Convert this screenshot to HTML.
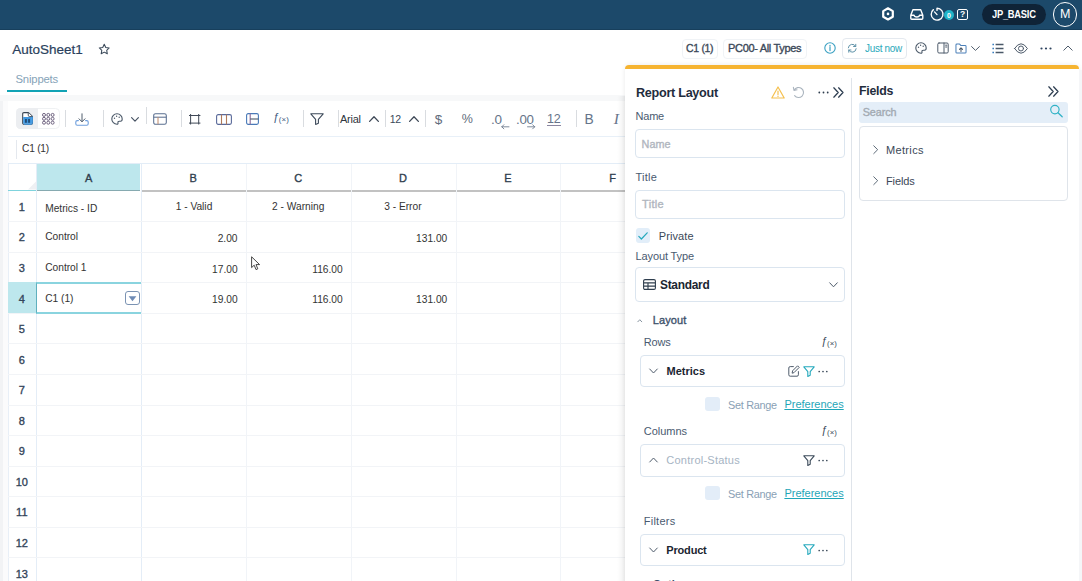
<!DOCTYPE html>
<html>
<head>
<meta charset="utf-8">
<title>AutoSheet1</title>
<style>
*{box-sizing:border-box;margin:0;padding:0}
html,body{width:1082px;height:581px;overflow:hidden;background:#fff;font-family:"Liberation Sans",sans-serif;color:#2b3a4a}
.abs{position:absolute}
#app{position:absolute;left:0;top:0;width:1082px;height:581px;overflow:hidden}
.t{position:absolute;white-space:nowrap;line-height:1;display:block}
svg{position:absolute;overflow:visible}
.ic{fill:none;stroke:#4f5c6c;stroke-width:1;stroke-linecap:round;stroke-linejoin:round}
.vl{position:absolute;width:1px;background:#f1f4f8}
.hl{position:absolute;height:1px;background:#f2f4f7}
.inp{position:absolute;border:1px solid #dbe5ef;border-radius:4px;background:#fff}
.sep{position:absolute;width:1px;background:#d9dce0;top:110px;height:17px}
</style>
</head>
<body>
<div id="app">

<div class="abs" style="left:0;top:0;width:1082px;height:30px;background:#1c496a"></div>
<div class="abs" style="left:0;top:29px;width:1082px;height:1.2px;background:#173f5c"></div>
<svg style="left:882.4px;top:7.4px" width="12" height="13.8" viewBox="0 0 12 13.8"><path d="M6 1.3 L10.8 4.1 V9.7 L6 12.5 L1.2 9.7 V4.1 Z" fill="none" stroke="#fff" stroke-width="2.2" stroke-linejoin="round"/><circle cx="6" cy="6.9" r="1.3" fill="#fff"/></svg>
<svg style="left:909.8px;top:8.8px" width="13.6" height="11" viewBox="0 0 13.6 11"><path d="M0.8 6.2 L2.9 0.8 H10.7 L12.8 6.2 V9.2 Q12.8 10.2 11.8 10.2 H1.8 Q0.8 10.2 0.8 9.2 Z M0.8 6.2 H4 Q4.3 8 6.8 8 Q9.3 8 9.6 6.2 H12.8" fill="none" stroke="#fff" stroke-width="1.4" stroke-linejoin="round"/></svg>
<svg style="left:930.2px;top:6.8px" width="14" height="14" viewBox="0 0 14 14"><path d="M3.4 2.6 A5.9 5.9 0 1 0 7 1.3 V3.4 M7 7.6 L4.5 4.9" fill="none" stroke="#fff" stroke-width="1.35" stroke-linecap="round"/></svg>
<div class="abs" style="left:943.7px;top:9.7px;width:10.6px;height:10.6px;border-radius:5.3px;background:#20b4c8"></div>
<div class="t" style="left:947.1px;top:11.6px;font-size:7px;font-weight:bold;color:#fff;">0</div>
<div class="abs" style="left:956.8px;top:8.9px;width:11.2px;height:10.9px;border:1.4px solid #fff;border-radius:2px"></div>
<div class="t" style="left:959.9px;top:10.4px;font-size:8.5px;font-weight:bold;color:#fff;">?</div>
<div class="abs" style="left:981.5px;top:3.8px;width:64.3px;height:21.6px;border-radius:10.8px;background:#0f2337"></div>
<div class="t" style="left:992.3px;top:9.1px;font-size:11px;font-weight:bold;color:#fff;letter-spacing:-0.30px;transform:scaleX(0.850);transform-origin:0 0;">JP_BASIC</div>
<div class="abs" style="left:1052.8px;top:2.4px;width:24.4px;height:24.4px;border-radius:12.2px;border:1.2px solid #fff"></div>
<div class="t" style="left:1060.1px;top:8.4px;font-size:12.5px;color:#fff;">M</div>
<div class="t" style="left:12.2px;top:42.5px;font-size:13.5px;color:#2a3f5c;-webkit-text-stroke:0.2px #2a3f5c;">AutoSheet1</div>
<svg style="left:98px;top:43px" width="12.5" height="12.5" viewBox="0 0 24 24"><path d="M12 2.5 L14.9 8.6 L21.5 9.5 L16.7 14.1 L17.9 20.7 L12 17.5 L6.1 20.7 L7.3 14.1 L2.5 9.5 L9.1 8.6 Z" fill="none" stroke="#3b4a5a" stroke-width="2" stroke-linejoin="round"/></svg>
<div class="t" style="left:15.5px;top:73.6px;font-size:11.3px;color:#86a3b8;letter-spacing:-0.18px;">Snippets</div>
<div class="abs" style="left:6.7px;top:89.9px;width:60.5px;height:2.6px;background:#12a3b5"></div>
<div class="abs" style="left:681.5px;top:38.5px;width:36.5px;height:20px;border:1px solid #f0f3f6;border-radius:4px"></div>
<div class="t" style="left:686.0px;top:43.3px;font-size:11px;color:#3b4858;letter-spacing:-0.30px;transform:scaleX(0.949);transform-origin:0 0;-webkit-text-stroke:0.35px #3b4858;">C1 (1)</div>
<div class="abs" style="left:723px;top:38.5px;width:83.5px;height:20px;border:1px solid #f0f3f6;border-radius:4px"></div>
<div class="t" style="left:728.0px;top:43.3px;font-size:11px;color:#3b4858;letter-spacing:-0.32px;-webkit-text-stroke:0.35px #3b4858;">PC00- All Types</div>
<svg style="left:823.5px;top:42px" width="12" height="12" viewBox="0 0 12 12"><circle cx="6" cy="6" r="5.2" fill="none" stroke="#3aa0c2" stroke-width="1.1"/><path d="M6 5.2 V8.6 M6 3.3 V3.9" stroke="#3aa0c2" stroke-width="1.2" stroke-linecap="round"/></svg>
<div class="abs" style="left:842.4px;top:38px;width:65px;height:21px;border:1px solid #e4e9ef;border-radius:4px"></div>
<svg style="left:846.8px;top:43px" width="10.5" height="10.5" viewBox="0 0 12 12"><path d="M1.5 5.5 A4.5 4.5 0 0 1 10 4 M10 1.5 V4 H7.5 M10.5 6.5 A4.5 4.5 0 0 1 2 8 M2 10.5 V8 H4.5" fill="none" stroke="#5a8fa6" stroke-width="1.1" stroke-linecap="round" stroke-linejoin="round"/></svg>
<div class="t" style="left:864.6px;top:43.3px;font-size:11px;color:#2aa8ba;letter-spacing:-0.30px;transform:scaleX(0.902);transform-origin:0 0;">Just now</div>
<svg style="left:915px;top:42px" width="12" height="12" viewBox="0 0 12 12"><path d="M6 0.8 A5.2 5.2 0 1 0 6 11.2 Q7.2 11.2 7 10 Q6.6 8.2 8.4 8.2 H9.6 Q11.2 8.2 11.2 6 A5.2 5.2 0 0 0 6 0.8 Z" fill="none" stroke="#4a5868" stroke-width="1.1"/><circle cx="3.5" cy="5.2" r="0.7" fill="#4a5868"/><circle cx="5.6" cy="3.3" r="0.7" fill="#4a5868"/><circle cx="8.2" cy="4.2" r="0.7" fill="#4a5868"/></svg>
<svg style="left:937px;top:42px" width="12" height="12" viewBox="0 0 12 12"><rect x="0.8" y="1" width="10.4" height="10" rx="1.2" class="ic"/><path d="M7 1 V11 M8.6 3.2 H9.8 M8.6 5 H9.8" class="ic"/></svg>
<svg style="left:954.6px;top:43.3px" width="12" height="11" viewBox="0 0 13 12"><path d="M1 2.2 Q1 1.2 2 1.2 H5 L6.2 2.6 H11 Q12 2.6 12 3.6 V10 Q12 11 11 11 H2 Q1 11 1 10 Z" fill="none" stroke="#4a7fb8" stroke-width="1.1" stroke-linejoin="round"/><path d="M6.5 9.2 V5.4 M4.8 7 L6.5 5.3 L8.2 7" fill="none" stroke="#4a5868" stroke-width="1.1" stroke-linecap="round" stroke-linejoin="round"/></svg>
<svg style="left:971px;top:46px" width="9" height="5" viewBox="0 0 9 5"><path d="M0.6 0.6 L4.5 4.4 L8.4 0.6" class="ic"/></svg>
<svg style="left:992px;top:43px" width="12" height="11" viewBox="0 0 12 11"><path d="M3.6 1.5 H11.5 M3.6 5.5 H11.5 M3.6 9.5 H11.5" stroke="#4a5868" stroke-width="1.4" fill="none"/><path d="M0.4 1.5 H2 M0.4 5.5 H2 M0.4 9.5 H2" stroke="#3a7fc0" stroke-width="1.6" fill="none"/></svg>
<svg style="left:1014px;top:42.5px" width="14" height="11" viewBox="0 0 14 11"><path d="M0.6 5.5 Q3.6 0.8 7 0.8 Q10.4 0.8 13.4 5.5 Q10.4 10.2 7 10.2 Q3.6 10.2 0.6 5.5 Z" class="ic"/><circle cx="7" cy="5.5" r="2.5" class="ic"/></svg>
<svg style="left:1040px;top:46.5px" width="12" height="3" viewBox="0 0 12 3"><circle cx="1.5" cy="1.5" r="1.1" fill="#2f4560"/><circle cx="6" cy="1.5" r="1.1" fill="#2f4560"/><circle cx="10.5" cy="1.5" r="1.1" fill="#2f4560"/></svg>
<svg style="left:1063px;top:45px" width="10" height="6" viewBox="0 0 10 6"><path d="M0.8 5.2 L5 1 L9.2 5.2" class="ic"/></svg>
<div class="abs" style="left:0;top:95px;width:1082px;height:486px;background:#f7f8f9"></div>
<div class="abs" style="left:8.2px;top:100.6px;width:1075px;height:481px;background:#fff"></div>
<div class="abs" style="left:0;top:101px;width:8.2px;height:480px;background:#fbfbfc"></div>
<div class="abs" style="left:0;top:101px;width:2.5px;height:480px;background:#f2f3f5"></div>
<div class="abs" style="left:8px;top:164px;width:1px;height:417px;background:#e8eff7"></div>
<div class="abs" style="left:16.3px;top:108.2px;width:43.4px;height:21px;border:1px solid #eff1f3;border-radius:4.5px;background:#fff"></div>
<div class="abs" style="left:16.3px;top:108.2px;width:21.7px;height:21px;border-radius:4.5px 0 0 4.5px;background:#eceef1"></div>
<svg style="left:22px;top:112px" width="11.1" height="12.9" viewBox="0 0 11 13"><path d="M1.8 0.6 H6.4 L10.4 4.4 V11 Q10.4 12.4 9 12.4 H2 Q0.6 12.4 0.6 11 V1.8 Q0.6 0.6 1.8 0.6 Z" fill="#fff" stroke="#3a4654" stroke-width="1.1" stroke-linejoin="round"/><path d="M1.1 5 H9.9 V11 Q9.9 11.9 9 11.9 H2 Q1.1 11.9 1.1 11 Z" fill="#3f97e0"/><path d="M6.2 0.8 V3.2 Q6.2 4.6 7.6 4.6 H10.2" fill="#fff" stroke="#3a4654" stroke-width="0.9"/><path d="M3.9 7 V10.8 M7 7 V10.8" stroke="#1c3f63" stroke-width="1.6"/><path d="M10.4 4.6 V11 Q10.4 12.4 9 12.4 H2" fill="none" stroke="#3f97e0" stroke-width="1"/></svg>
<svg style="left:42.2px;top:112.8px" width="12.6" height="11.6" viewBox="0 0 12.6 11.6"><circle cx="2.0" cy="1.9" r="1.5" fill="none" stroke="#6e6280" stroke-width="1"/><circle cx="6.3" cy="1.9" r="1.5" fill="none" stroke="#6e6280" stroke-width="1"/><circle cx="10.6" cy="1.9" r="1.5" fill="none" stroke="#6e6280" stroke-width="1"/><circle cx="2.0" cy="5.8" r="1.5" fill="none" stroke="#6e6280" stroke-width="1"/><circle cx="6.3" cy="5.8" r="1.5" fill="none" stroke="#6e6280" stroke-width="1"/><circle cx="10.6" cy="5.8" r="1.5" fill="none" stroke="#6e6280" stroke-width="1"/><circle cx="2.0" cy="9.7" r="1.5" fill="none" stroke="#6e6280" stroke-width="1"/><circle cx="6.3" cy="9.7" r="1.5" fill="none" stroke="#6e6280" stroke-width="1"/><circle cx="10.6" cy="9.7" r="1.5" fill="none" stroke="#6e6280" stroke-width="1"/></svg>
<div class="sep" style="left:64.5px"></div>
<svg style="left:75px;top:112.5px" width="14" height="13" viewBox="0 0 14 13"><path d="M7 0.8 V8.6 M4 5.8 L7 8.8 L10 5.8" class="ic"/><path d="M3.4 7.6 H2.2 Q0.8 7.6 0.8 9 V10.8 Q0.8 12.2 2.2 12.2 H11.8 Q13.2 12.2 13.2 10.8 V9 Q13.2 7.6 11.8 7.6 H10.6" fill="none" stroke="#6f9fdd" stroke-width="1.1" stroke-linecap="round"/></svg>
<div class="sep" style="left:103px"></div>
<svg style="left:111px;top:113px" width="12" height="12" viewBox="0 0 12 12"><path d="M6 0.8 A5.2 5.2 0 1 0 6 11.2 Q7.2 11.2 7 10 Q6.6 8.2 8.4 8.2 H9.6 Q11.2 8.2 11.2 6 A5.2 5.2 0 0 0 6 0.8 Z" fill="none" stroke="#4a5868" stroke-width="1.1"/><circle cx="3.5" cy="5.2" r="0.7" fill="#4a5868"/><circle cx="5.6" cy="3.3" r="0.7" fill="#4a5868"/><circle cx="8.2" cy="4.2" r="0.7" fill="#4a5868"/></svg>
<svg style="left:131px;top:117px" width="8" height="5" viewBox="0 0 8 5"><path d="M0.6 0.6 L4 4.2 L7.4 0.6" class="ic" style="stroke-width:1.15;stroke:#465262"/></svg>
<div class="sep" style="left:145.5px;top:107px"></div>
<svg style="left:152.5px;top:113px" width="14" height="12" viewBox="0 0 14 12"><rect x="0.7" y="0.7" width="12.6" height="10.6" rx="1.8" fill="none" stroke="#5a6f90" stroke-width="1.05"/><path d="M0.7 4.2 H13.3" stroke="#5a6f90" stroke-width="1.05"/><path d="M5 4.2 V11.3" stroke="#c08a6a" stroke-width="1"/></svg>
<div class="sep" style="left:181px"></div>
<svg style="left:189.1px;top:113.6px" width="11.4" height="10.5" viewBox="0 0 11.4 10.5"><path d="M1.6 0 V10.5 M9.7 0 V10.5 M0 1.5 H11.4 M0 9.1 H11.4" stroke="#3f4856" stroke-width="1" fill="none"/></svg>
<svg style="left:216px;top:114px" width="16" height="11" viewBox="0 0 16 11"><rect x="0.6" y="0.6" width="14.8" height="9.8" rx="1.6" fill="none" stroke="#5a6a9a" stroke-width="1.1"/><path d="M5.5 0.6 V10.4 M10.5 0.6 V10.4" stroke="#b07a5a" stroke-width="1.1"/></svg>
<svg style="left:246px;top:113px" width="13" height="12" viewBox="0 0 13 12"><rect x="0.6" y="0.6" width="11.8" height="10.8" rx="1.6" fill="none" stroke="#4a7ab8" stroke-width="1.1"/><path d="M4.2 0.6 V11.4" stroke="#8a6a9a" stroke-width="1.1"/><path d="M4.2 6 H12.4" stroke="#4a5868" stroke-width="1.1"/></svg>
<div class="t" style="left:272.8px;top:112.1px;font-size:11px;color:#3d5a80;font-style:italic">ƒ</div>
<div class="t" style="left:278.8px;top:116.3px;font-size:7.92px;color:#3d5a80;letter-spacing:0.11px;">(×)</div>
<div class="sep" style="left:303px"></div>
<svg style="left:310px;top:113px" width="14" height="12" viewBox="0 0 14 12"><path d="M0.8 0.8 H13.2 L8.4 6.4 V10.2 L5.6 11.4 V6.4 Z" fill="none" stroke="#3d4a5a" stroke-width="1.1" stroke-linejoin="round"/></svg>
<div class="sep" style="left:338px"></div>
<div class="t" style="left:340.0px;top:113.7px;font-size:11px;color:#2f3640;letter-spacing:-0.24px;">Arial</div>
<svg style="left:369px;top:116px" width="10" height="6" viewBox="0 0 10 6"><path d="M0.6 5.4 L5 0.8 L9.4 5.4" class="ic" style="stroke-width:1.3;stroke:#3d4856"/></svg>
<div class="sep" style="left:385px"></div>
<div class="t" style="left:389.7px;top:114.1px;font-size:10.5px;color:#3b4a5a;letter-spacing:-0.19px;">12</div>
<svg style="left:409px;top:116px" width="10" height="6" viewBox="0 0 10 6"><path d="M0.6 5.4 L5 0.8 L9.4 5.4" class="ic" style="stroke-width:1.3;stroke:#3d4856"/></svg>
<div class="sep" style="left:424.5px"></div>
<div class="t" style="left:434.7px;top:112.6px;font-size:13.5px;color:#5f6b7b;">$</div>
<div class="t" style="left:461.8px;top:113.1px;font-size:12.5px;color:#5f6b7b;">%</div>
<div class="t" style="left:491.0px;top:112.5px;font-size:13.5px;color:#66748a;letter-spacing:-0.13px;">.0</div>
<svg style="left:500.5px;top:124.2px" width="8.5" height="5.6" viewBox="0 0 9 6"><path d="M8.5 3 H0.8 M3 0.8 L0.8 3 L3 5.2" class="ic" style="stroke-width:0.9;stroke:#66748a"/></svg>
<div class="t" style="left:515.8px;top:112.5px;font-size:13.5px;color:#66748a;letter-spacing:-0.30px;transform:scaleX(0.985);transform-origin:0 0;">.00</div>
<svg style="left:526.8px;top:124.4px" width="8.5" height="5.6" viewBox="0 0 9 6"><path d="M0.5 3 H8.2 M6 0.8 L8.2 3 L6 5.2" class="ic" style="stroke-width:0.9;stroke:#66748a"/></svg>
<div class="t" style="left:547.0px;top:112.3px;font-size:13.5px;color:#66748a;letter-spacing:-0.30px;transform:scaleX(0.930);transform-origin:0 0;">12</div>
<div class="abs" style="left:547px;top:124.6px;width:13.6px;height:1px;background:#8a86a0"></div>
<div class="sep" style="left:575.5px"></div>
<div class="t" style="left:584.6px;top:112.6px;font-size:13.8px;color:#66748a;">B</div>
<div class="t" style="left:613.8px;top:110.6px;font-size:15.5px;color:#66748a;font-family:'Liberation Serif',serif;font-style:italic">I</div>
<div class="abs" style="left:8px;top:136px;width:617px;height:1px;background:#e8f0f8"></div>
<div class="abs" style="left:15.5px;top:140px;width:1px;height:19px;background:#e4e8ee"></div>
<div class="t" style="left:22.0px;top:144.1px;font-size:10.2px;color:#333;letter-spacing:-0.22px;">C1 (1)</div>
<div class="abs" style="left:8px;top:163px;width:617px;height:1px;background:#e3edf7"></div>
<div class="abs" style="left:36.8px;top:163.5px;width:103.6px;height:26.6px;background:#bde7ed"></div>
<svg style="left:27.5px;top:181px" width="8.5" height="8.5" viewBox="0 0 10 10"><path d="M10 0 V10 H0 Z" fill="#eef0f3"/></svg>
<div class="abs" style="left:8px;top:189.8px;width:28.8px;height:1.5px;background:#7fd3dd"></div>
<div class="abs" style="left:36.8px;top:190px;width:103.6px;height:1.4px;background:#86aab0"></div>
<div class="abs" style="left:140.6px;top:190px;width:485px;height:1.5px;background:#c2c2c2"></div>
<div class="t" style="left:84.9px;top:172.5px;font-size:11px;color:#2f3e4e;-webkit-text-stroke:0.35px #2f3e4e;">A</div>
<div class="t" style="left:189.6px;top:172.5px;font-size:11px;color:#2f3e4e;-webkit-text-stroke:0.35px #2f3e4e;">B</div>
<div class="t" style="left:294.2px;top:172.5px;font-size:11px;color:#2f3e4e;-webkit-text-stroke:0.35px #2f3e4e;">C</div>
<div class="t" style="left:399.1px;top:172.5px;font-size:11px;color:#2f3e4e;-webkit-text-stroke:0.35px #2f3e4e;">D</div>
<div class="t" style="left:504.2px;top:172.5px;font-size:11px;color:#2f3e4e;-webkit-text-stroke:0.35px #2f3e4e;">E</div>
<div class="t" style="left:609.2px;top:172.5px;font-size:11px;color:#2f3e4e;-webkit-text-stroke:0.35px #2f3e4e;">F</div>
<div class="vl" style="left:36.3px;top:164px;height:417px;background:#e4edf7"></div>
<div class="vl" style="left:140.8px;top:164px;height:417px;background:#e4edf7"></div>
<div class="vl" style="left:245.8px;top:164px;height:417px"></div>
<div class="vl" style="left:350.6px;top:164px;height:417px"></div>
<div class="vl" style="left:455.5px;top:164px;height:417px"></div>
<div class="vl" style="left:560.2px;top:164px;height:417px"></div>
<div class="hl" style="left:8px;top:221.2px;width:617px"></div>
<div class="hl" style="left:8px;top:251.8px;width:617px"></div>
<div class="hl" style="left:8px;top:282.4px;width:617px"></div>
<div class="hl" style="left:8px;top:312.9px;width:617px"></div>
<div class="hl" style="left:8px;top:343.4px;width:617px"></div>
<div class="hl" style="left:8px;top:374.0px;width:617px"></div>
<div class="hl" style="left:8px;top:404.5px;width:617px"></div>
<div class="hl" style="left:8px;top:435.1px;width:617px"></div>
<div class="hl" style="left:8px;top:465.6px;width:617px"></div>
<div class="hl" style="left:8px;top:496.2px;width:617px"></div>
<div class="hl" style="left:8px;top:526.8px;width:617px"></div>
<div class="hl" style="left:8px;top:557.3px;width:617px"></div>
<div class="hl" style="left:8px;top:587.9px;width:617px"></div>
<div class="abs" style="left:8.4px;top:282.4px;width:28px;height:30.5px;background:#bde7ed"></div>
<div class="t" style="left:18.7px;top:201.9px;font-size:11px;color:#33455a;-webkit-text-stroke:0.35px #33455a;">1</div>
<div class="t" style="left:18.7px;top:232.4px;font-size:11px;color:#33455a;-webkit-text-stroke:0.35px #33455a;">2</div>
<div class="t" style="left:18.7px;top:263.0px;font-size:11px;color:#33455a;-webkit-text-stroke:0.35px #33455a;">3</div>
<div class="t" style="left:18.7px;top:293.5px;font-size:11px;color:#33455a;-webkit-text-stroke:0.35px #33455a;">4</div>
<div class="t" style="left:18.7px;top:324.1px;font-size:11px;color:#33455a;-webkit-text-stroke:0.35px #33455a;">5</div>
<div class="t" style="left:18.7px;top:354.6px;font-size:11px;color:#33455a;-webkit-text-stroke:0.35px #33455a;">6</div>
<div class="t" style="left:18.7px;top:385.2px;font-size:11px;color:#33455a;-webkit-text-stroke:0.35px #33455a;">7</div>
<div class="t" style="left:18.7px;top:415.7px;font-size:11px;color:#33455a;-webkit-text-stroke:0.35px #33455a;">8</div>
<div class="t" style="left:18.7px;top:446.3px;font-size:11px;color:#33455a;-webkit-text-stroke:0.35px #33455a;">9</div>
<div class="t" style="left:15.7px;top:476.8px;font-size:11px;color:#33455a;-webkit-text-stroke:0.35px #33455a;">10</div>
<div class="t" style="left:16.1px;top:507.4px;font-size:11px;color:#33455a;-webkit-text-stroke:0.35px #33455a;">11</div>
<div class="t" style="left:15.7px;top:537.9px;font-size:11px;color:#33455a;-webkit-text-stroke:0.35px #33455a;">12</div>
<div class="t" style="left:15.7px;top:568.5px;font-size:11px;color:#33455a;-webkit-text-stroke:0.35px #33455a;">13</div>
<div class="abs" style="left:36.2px;top:281.8px;width:104.6px;height:31.9px;border-top:2px solid #8ad4df;border-bottom:2px solid #8ad4df;border-left:1.2px solid #5fb0be;background:#fff"></div>
<div class="abs" style="left:124.5px;top:290.8px;width:15.2px;height:14.4px;border:1.6px solid #7b93b3;border-radius:3px;background:#fff"></div>
<svg style="left:127.5px;top:295.8px" width="9" height="5.4" viewBox="0 0 9 6"><path d="M0.2 0.3 H8.8 L4.5 5.8 Z" fill="#6e8bb5"/></svg>
<div class="t" style="left:45.2px;top:203.9px;font-size:10.2px;color:#333;">Metrics - ID</div>
<div class="t" style="left:45.2px;top:232.2px;font-size:10.2px;color:#333;">Control</div>
<div class="t" style="left:45.2px;top:262.8px;font-size:10.2px;color:#333;">Control 1</div>
<div class="t" style="left:45.2px;top:294.2px;font-size:10.2px;color:#333;">C1 (1)</div>
<div class="t" style="left:175.7px;top:201.8px;font-size:10.2px;color:#333;">1 - Valid</div>
<div class="t" style="left:272.1px;top:201.8px;font-size:10.2px;color:#333;">2 - Warning</div>
<div class="t" style="left:384.2px;top:201.8px;font-size:10.2px;color:#333;">3 - Error</div>
<div class="t" style="left:217.7px;top:233.9px;font-size:10.2px;color:#333;">2.00</div>
<div class="t" style="left:212.1px;top:264.5px;font-size:10.2px;color:#333;">17.00</div>
<div class="t" style="left:212.1px;top:295.2px;font-size:10.2px;color:#333;">19.00</div>
<div class="t" style="left:312.3px;top:264.5px;font-size:10.2px;color:#333;">116.00</div>
<div class="t" style="left:312.3px;top:295.2px;font-size:10.2px;color:#333;">116.00</div>
<div class="t" style="left:416.1px;top:233.9px;font-size:10.2px;color:#333;">131.00</div>
<div class="t" style="left:416.1px;top:295.2px;font-size:10.2px;color:#333;">131.00</div>
<svg style="left:251px;top:255.5px" width="10" height="15" viewBox="0 0 10 15"><path d="M0.6 0.8 V11.6 L3.2 9.2 L5 13.6 L6.8 12.8 L5 8.6 H8.6 Z" fill="#fff" stroke="#333" stroke-width="0.9" stroke-linejoin="round"/></svg>
<div class="abs" style="left:617px;top:96px;width:8px;height:485px;background:linear-gradient(to right,rgba(0,0,0,0),rgba(0,0,0,0.05))"></div>
<div class="abs" style="left:624.7px;top:64.6px;width:454.3px;height:520px;background:#fff;border-radius:5px 5px 0 0;box-shadow:0 0 5px rgba(0,0,0,0.09)"></div>
<div class="abs" style="left:624.7px;top:64.6px;width:454.3px;height:4.3px;background:#f6b431;border-radius:5px 5px 0 0"></div>
<div class="abs" style="left:1079px;top:70px;width:3px;height:511px;background:#f5f6f8"></div>
<div class="abs" style="left:851px;top:78px;width:1px;height:503px;background:#dfe4ea"></div>
<div class="t" style="left:635.5px;top:86.4px;font-size:13.2px;font-weight:bold;color:#1f2d3d;letter-spacing:-0.30px;transform:scaleX(0.958);transform-origin:0 0;">Report Layout</div>
<svg style="left:771px;top:86px" width="14" height="13" viewBox="0 0 14 13"><path d="M7 1 L13.2 12 H0.8 Z" fill="none" stroke="#f5c04f" stroke-width="1.2" stroke-linejoin="round"/><path d="M7 5 V8.4 M7 10 V10.4" stroke="#f5c04f" stroke-width="1.2" stroke-linecap="round"/></svg>
<svg style="left:792px;top:86px" width="13" height="13" viewBox="0 0 13 13"><path d="M2.2 4 A5 5 0 1 1 2.6 9.6 M1.4 1.4 L2 4.4 L5 3.8" fill="none" stroke="#aab4be" stroke-width="1.1" stroke-linecap="round" stroke-linejoin="round"/></svg>
<svg style="left:818px;top:90.5px" width="11" height="3" viewBox="0 0 11 3"><circle cx="1.3" cy="1.5" r="0.9" fill="#2f3e4e"/><circle cx="5.5" cy="1.5" r="0.9" fill="#2f3e4e"/><circle cx="9.7" cy="1.5" r="0.9" fill="#2f3e4e"/></svg>
<svg style="left:833px;top:86.5px" width="11" height="11" viewBox="0 0 11 11"><path d="M0.8 0.8 L5.2 5.5 L0.8 10.2 M5.6 0.8 L10 5.5 L5.6 10.2" fill="none" stroke="#2d3d50" stroke-width="1.25" stroke-linecap="round" stroke-linejoin="round"/></svg>
<div class="t" style="left:635.5px;top:111.2px;font-size:11px;color:#4a5a70;letter-spacing:-0.21px;">Name</div>
<div class="inp" style="left:635px;top:129.3px;width:209.5px;height:28.7px"></div>
<div class="t" style="left:641.6px;top:138.9px;font-size:10.8px;color:#b0b6be;-webkit-text-stroke:0.35px #b0b6be;">Name</div>
<div class="t" style="left:635.5px;top:171.7px;font-size:11px;color:#4a5a70;letter-spacing:0.23px;">Title</div>
<div class="inp" style="left:635px;top:190px;width:209.5px;height:28.7px"></div>
<div class="t" style="left:641.6px;top:199.2px;font-size:10.8px;color:#b0b6be;letter-spacing:0.30px;transform:scaleX(1.023);transform-origin:0 0;-webkit-text-stroke:0.35px #b0b6be;">Title</div>
<div class="abs" style="left:636px;top:228.3px;width:14.3px;height:14.3px;border-radius:3px;background:#e2eef9"></div>
<svg style="left:638.2px;top:231.6px" width="10" height="8" viewBox="0 0 10 8"><path d="M0.8 4.4 L3.4 7 L9.2 0.8" fill="none" stroke="#25a9bd" stroke-width="1.2" stroke-linecap="round" stroke-linejoin="round"/></svg>
<div class="t" style="left:658.7px;top:231.0px;font-size:11px;color:#3b4858;letter-spacing:0.12px;">Private</div>
<div class="t" style="left:635.5px;top:251.1px;font-size:11px;color:#4a5a70;letter-spacing:-0.11px;">Layout Type</div>
<div class="inp" style="left:635px;top:267.4px;width:209.5px;height:34.2px"></div>
<svg style="left:643px;top:278.5px" width="13" height="11" viewBox="0 0 13 11"><rect x="0.6" y="0.6" width="11.8" height="9.8" rx="1.4" fill="none" stroke="#2f3e4e" stroke-width="1.1"/><path d="M0.6 3.9 H12.4 M0.6 7.1 H12.4 M5 3.9 V10.4" stroke="#2f3e4e" stroke-width="1.1" fill="none"/></svg>
<div class="t" style="left:660.0px;top:277.8px;font-size:13px;font-weight:bold;color:#1a2531;letter-spacing:-0.30px;transform:scaleX(0.916);transform-origin:0 0;">Standard</div>
<svg style="left:829px;top:282px" width="9" height="6" viewBox="0 0 9 6"><path d="M0.7 0.8 L4.5 4.8 L8.3 0.8" class="ic"/></svg>
<svg style="left:637.2px;top:318.6px" width="5.6" height="3.6" viewBox="0 0 6 4"><path d="M0.5 3.4 L3 0.8 L5.5 3.4" fill="none" stroke="#6a7a8a" stroke-width="0.9"/></svg>
<div class="t" style="left:652.7px;top:314.9px;font-size:11px;color:#3d516b;letter-spacing:0.13px;-webkit-text-stroke:0.35px #3d516b;">Layout</div>
<div class="t" style="left:643.7px;top:337.0px;font-size:11px;color:#4a5a70;letter-spacing:-0.15px;">Rows</div>
<div class="t" style="left:821.1px;top:335.9px;font-size:10.8px;color:#3b4a5a;font-style:italic">ƒ</div>
<div class="t" style="left:827.0px;top:340.0px;font-size:7.776px;color:#3b4a5a;letter-spacing:0.11px;">(×)</div>
<div class="inp" style="left:639.5px;top:355.4px;width:205px;height:31.4px"></div>
<svg style="left:648.8px;top:368.4px" width="9" height="6" viewBox="0 0 9 6"><path d="M0.7 1 L4.5 5 L8.3 1" class="ic"/></svg>
<div class="t" style="left:666.5px;top:365.9px;font-size:11px;font-weight:bold;color:#1a2531;">Metrics</div>
<svg style="left:788px;top:365px" width="12" height="12" viewBox="0 0 12 12"><path d="M5.4 1.6 H2.2 Q0.8 1.6 0.8 3 V9.8 Q0.8 11.2 2.2 11.2 H9 Q10.4 11.2 10.4 9.8 V6.6" class="ic"/><path d="M4.2 7.8 L4.6 5.8 L9.6 0.8 L11.2 2.4 L6.2 7.4 Z" class="ic"/></svg>
<svg style="left:803.0px;top:365.5px" width="12" height="11" viewBox="0 0 12 11"><path d="M0.8 0.8 H11.2 L7.2 5.6 V9.2 L4.8 10.4 V5.6 Z" fill="none" stroke="#25a9bd" stroke-width="1.1" stroke-linejoin="round"/></svg>
<svg style="left:817.6px;top:370.2px" width="10" height="3" viewBox="0 0 10 3"><circle cx="1.2" cy="1.5" r="0.85" fill="#3b4a5a"/><circle cx="5" cy="1.5" r="0.85" fill="#3b4a5a"/><circle cx="8.8" cy="1.5" r="0.85" fill="#3b4a5a"/></svg>
<div class="abs" style="left:705px;top:396.7px;width:15px;height:14px;border-radius:3px;background:#e3edf8"></div>
<div class="t" style="left:727.9px;top:399.6px;font-size:11px;color:#8a9fb5;letter-spacing:-0.30px;transform:scaleX(0.990);transform-origin:0 0;">Set Range</div>
<div class="t" style="left:784.4px;top:398.5px;font-size:11px;color:#1fa6b8;text-decoration:underline;">Preferences</div>
<div class="t" style="left:643.7px;top:426.2px;font-size:11px;color:#4a5a70;">Columns</div>
<div class="t" style="left:821.1px;top:425.1px;font-size:10.8px;color:#3b4a5a;font-style:italic">ƒ</div>
<div class="t" style="left:827.0px;top:429.2px;font-size:7.776px;color:#3b4a5a;letter-spacing:0.11px;">(×)</div>
<div class="inp" style="left:639.5px;top:444.4px;width:205px;height:32.4px"></div>
<svg style="left:648.8px;top:457.0px" width="9" height="6" viewBox="0 0 9 6"><path d="M0.7 5 L4.5 1 L8.3 5" class="ic"/></svg>
<div class="t" style="left:666.3px;top:454.6px;font-size:11px;color:#a6b4c3;letter-spacing:0.24px;">Control-Status</div>
<svg style="left:803.0px;top:454.5px" width="12" height="11" viewBox="0 0 12 11"><path d="M0.8 0.8 H11.2 L7.2 5.6 V9.2 L4.8 10.4 V5.6 Z" fill="none" stroke="#3b4a5a" stroke-width="1.1" stroke-linejoin="round"/></svg>
<svg style="left:817.6px;top:459.3px" width="10" height="3" viewBox="0 0 10 3"><circle cx="1.2" cy="1.5" r="0.85" fill="#3b4a5a"/><circle cx="5" cy="1.5" r="0.85" fill="#3b4a5a"/><circle cx="8.8" cy="1.5" r="0.85" fill="#3b4a5a"/></svg>
<div class="abs" style="left:705px;top:485.9px;width:15px;height:14px;border-radius:3px;background:#e3edf8"></div>
<div class="t" style="left:727.9px;top:488.8px;font-size:11px;color:#8a9fb5;letter-spacing:-0.30px;transform:scaleX(0.990);transform-origin:0 0;">Set Range</div>
<div class="t" style="left:784.4px;top:487.7px;font-size:11px;color:#1fa6b8;text-decoration:underline;">Preferences</div>
<div class="t" style="left:643.7px;top:515.6px;font-size:11px;color:#4a5a70;letter-spacing:0.27px;">Filters</div>
<div class="inp" style="left:639.5px;top:534.2px;width:205px;height:31.8px"></div>
<svg style="left:648.8px;top:547.3px" width="9" height="6" viewBox="0 0 9 6"><path d="M0.7 1 L4.5 5 L8.3 1" class="ic"/></svg>
<div class="t" style="left:666.3px;top:544.8px;font-size:11px;font-weight:bold;color:#1a2531;letter-spacing:-0.18px;">Product</div>
<svg style="left:803.0px;top:544.4px" width="12" height="11" viewBox="0 0 12 11"><path d="M0.8 0.8 H11.2 L7.2 5.6 V9.2 L4.8 10.4 V5.6 Z" fill="none" stroke="#25a9bd" stroke-width="1.1" stroke-linejoin="round"/></svg>
<svg style="left:817.6px;top:549.0px" width="10" height="3" viewBox="0 0 10 3"><circle cx="1.2" cy="1.5" r="0.85" fill="#3b4a5a"/><circle cx="5" cy="1.5" r="0.85" fill="#3b4a5a"/><circle cx="8.8" cy="1.5" r="0.85" fill="#3b4a5a"/></svg>
<div class="t" style="left:652.7px;top:579.3px;font-size:11px;font-weight:bold;color:#3d516b;">Options</div>
<div class="t" style="left:859.2px;top:83.5px;font-size:13.5px;font-weight:bold;color:#1f2d3d;letter-spacing:-0.30px;transform:scaleX(0.916);transform-origin:0 0;">Fields</div>
<svg style="left:1048px;top:86px" width="11" height="11" viewBox="0 0 11 11"><path d="M0.8 0.8 L5.2 5.5 L0.8 10.2 M5.6 0.8 L10 5.5 L5.6 10.2" fill="none" stroke="#2d3d50" stroke-width="1.25" stroke-linecap="round" stroke-linejoin="round"/></svg>
<div class="abs" style="left:859.2px;top:102.3px;width:209.3px;height:21px;border-radius:3px;background:#e4eef8"></div>
<div class="t" style="left:862.7px;top:106.5px;font-size:10.8px;color:#a2aab2;letter-spacing:-0.09px;-webkit-text-stroke:0.35px #a2aab2;">Search</div>
<svg style="left:1049px;top:104px" width="14" height="14" viewBox="0 0 14 14"><circle cx="5.9" cy="5.6" r="4.2" fill="none" stroke="#2fb2c6" stroke-width="1.15"/><path d="M9 8.8 L13.2 12.8" stroke="#2fb2c6" stroke-width="1.25" stroke-linecap="round"/></svg>
<div class="inp" style="left:859.2px;top:125.8px;width:209.3px;height:75px;border-color:#dfe4ea"></div>
<svg style="left:872.5px;top:144.8px" width="5.6" height="9.4" viewBox="0 0 6 10"><path d="M0.8 0.8 L5 5 L0.8 9.2" class="ic"/></svg>
<div class="t" style="left:886.0px;top:144.7px;font-size:11px;color:#3b4858;letter-spacing:0.34px;">Metrics</div>
<svg style="left:872.5px;top:175.8px" width="5.6" height="9.4" viewBox="0 0 6 10"><path d="M0.8 0.8 L5 5 L0.8 9.2" class="ic"/></svg>
<div class="t" style="left:886.0px;top:175.6px;font-size:11px;color:#3b4858;letter-spacing:-0.12px;">Fields</div>
</div>
</body>
</html>
